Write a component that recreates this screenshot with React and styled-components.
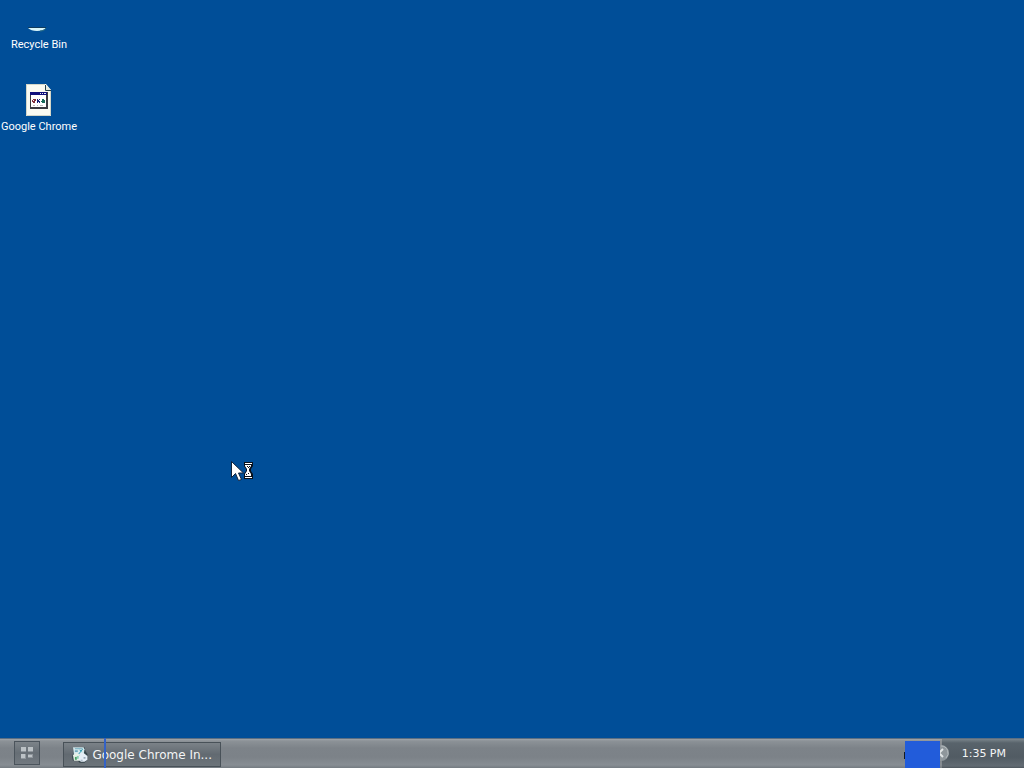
import React from 'react';
import styled, { createGlobalStyle } from 'styled-components';

const GlobalStyle = createGlobalStyle`
  * { box-sizing: border-box; }
  body { margin: 0; background: #004e98; }
`;

const Screen = styled.div`
  position: relative;
  display: flex;
  flex-direction: column;
  min-height: 100vh;
  overflow: hidden;
  cursor: default;
`;

const Desktop = styled.main`
  flex: 1;
  display: flex;
  flex-direction: column;
  align-items: flex-start;
  gap: 32px;
  padding-top: 2px;
  background: #004e98;
`;

const Shortcut = styled.button`
  display: flex;
  flex-direction: column;
  align-items: center;
  gap: 4px;
  width: 78px;
  padding: 0;
  border: 0;
  background: none;
  color: #fff;
  font: 11px/14px Roboto, Tahoma, sans-serif;
  white-space: nowrap;
`;

const Pointer = styled.svg`
  position: absolute;
  left: 231px;
  top: 461px;
  pointer-events: none;
`;

const Taskbar = styled.footer`
  position: relative;
  display: flex;
  align-items: stretch;
  height: 30px;
  border-top: 1px solid #5b6f84;
  background: linear-gradient(#a0a5a9 0, #8c9297 2px, #7d8389 9px, #7c8288 18px, #878d93 26px, #747b81 29px);
  font: 11px/14px 'DejaVu Sans', Verdana, sans-serif;
  color: #f4f5f6;
`;

const StartButton = styled.button`
  display: flex;
  align-items: center;
  justify-content: center;
  width: 26px;
  height: 24px;
  margin: 2px 23px 0 14px;
  padding: 0;
  border: 1px solid #4b545c;
  background: linear-gradient(#7c8389, #666e75 50%, #727980);
`;

const TaskButton = styled.button`
  display: flex;
  align-items: center;
  gap: 4px;
  width: 158px;
  height: 25px;
  margin-top: 3px;
  padding: 0 8px;
  border: 1px solid #485158;
  background: linear-gradient(#7b8288, #626a71 50%, #6c747a);
  color: inherit;
  font: inherit;
  font-size: 12px;
  white-space: nowrap;
`;

const Tray = styled.div`
  display: flex;
  align-items: center;
  gap: 12px;
  margin-left: auto;
  padding-right: 18px;
  background: linear-gradient(#7b858c 0, #58636b 4px, #515b63 18px, #626b73 27px, #4c555c 29px);
`;

const Chevron = styled.button`
  display: flex;
  width: 16px;
  height: 18px;
  margin-left: -8px;
  padding: 0;
  border: 0;
  background: none;
`;

const Line = styled.span`
  position: absolute;
  left: 104px;
  top: -1px;
  width: 2px;
  height: 30px;
  background: #3462c6;
`;

const Patch = styled.span`
  position: absolute;
  right: 84px;
  top: 2px;
  width: 35px;
  height: 27px;
  background: #225cda;
`;

const Notch = styled.span`
  position: absolute;
  right: 119px;
  top: 13px;
  width: 1px;
  height: 7px;
  background: #161b22;
`;

function RecycleIcon() {
  return (
    <svg width="32" height="32" viewBox="0 0 32 32" aria-hidden="true">
      <path d="M5 25.500h18" stroke="#0f3a5c" />
      <path d="M5 26h18c-2 2-5 3-9 3s-7-1-9-3z" fill="#d8f6fa" />
      <path d="M17 29c3 0 5-1 6-3" stroke="#2d7184" fill="none" />
    </svg>
  );
}

function ProgramIcon() {
  return (
    <svg width="32" height="32" viewBox="0 0 32 32" aria-hidden="true">
      <path d="M3 0h20l5 6v26H3z" fill="#fafaf2" />
      <path d="M3 .5h19M3.500 0v31.500h24V7" fill="none" stroke="#d4d6c8" />
      <path d="M22 1v5h6z" fill="#e5eadf" />
      <path d="M22.500 1v5.500H28" fill="none" stroke="#26414a" />
      <rect x="7" y="8" width="18" height="17" fill="#3a3a40" />
      <rect x="8" y="11" width="15" height="12" fill="#fff" />
      <rect x="7" y="8" width="17" height="3" fill="#10107c" />
      <path d="M17 9h1v1h-1zM19 9h1v1h-1zM21 9h2v1h-2z" fill="#e4e4ec" />
      <path d="M10 15h3v2h-1v2h-2v-1H9v-2h1z" fill="#822c38" />
      <path d="M10 16h1v1h-1z" fill="#fff" />
      <path d="M14 15h1v1h1v-1h1v1h-1v1h1v2h-1v-1h-1v1h-1z" fill="#1b2379" />
      <path d="M19 15h2v1h1v3h-3v-1h-1v-1h1z" fill="#176a58" />
      <path d="M10 21h2v1h-2zM14 21h1v1h-1zM17 21h3v1h-3z" fill="#bbb" />
    </svg>
  );
}

function InstallerIcon() {
  return (
    <svg width="17" height="17" viewBox="0 0 17 17" aria-hidden="true">
      <path d="M1 1h12l1 4 2 3v6l-3 3H8l-2-2H1l-1-4 1-3z" fill="#36464c" />
      <path d="M1 1h11l1 2-1 6H2z" fill="#d5e8ec" />
      <path d="M3 2h8v1H3zM3 4h3v2H3z" fill="#6fa9bc" />
      <path d="M11 3L7 8M8 4l2 1" stroke="#2e98b0" strokeWidth="1" />
      <path d="M1 9l4-2 4 3v5H2z" fill="#e7f2e8" />
      <path d="M3 11h2v3H3z" fill="#45a263" />
      <path d="M5 10h2v3H5z" fill="#8ccbb4" />
      <path d="M9 7h3l4 3v4l-3 2H9l-2-3z" fill="#e4edf6" />
      <path d="M12 11h2v2h-2zM9 14h2v1H9z" fill="#9aaabb" />
    </svg>
  );
}

export default function App() {
  return (
    <Screen>
      <GlobalStyle />
      <Desktop>
        <Shortcut><RecycleIcon />Recycle Bin</Shortcut>
        <Shortcut><ProgramIcon />Google Chrome</Shortcut>
      </Desktop>
      <Taskbar>
        <StartButton aria-label="Start">
          <svg width="14" height="14" viewBox="0 0 14 14" aria-hidden="true">
            <path d="M1 1h5v5H1zM8 1h5v5H8zM1 8h5v5H1zM8 8h5v4H8z" fill="#8f969c" />
            <path d="M1 1h5v4H1zM8 1h5v4H8zM1 8h4v4H1zM8 9h4v2H8z" fill="#bcc2c6" />
          </svg>
        </StartButton>
        <TaskButton><InstallerIcon />Google Chrome In...</TaskButton>
        <Tray>
          <Chevron aria-label="Show hidden icons">
            <svg width="16" height="18" viewBox="0 0 16 18" aria-hidden="true">
              <circle cx="7" cy="8" r="8" fill="#8e969b" />
              <path d="M7 1a7 7 0 0 1 5 12" fill="none" stroke="#b3babd" />
              <path d="M9 4L5 8l4 4" fill="none" stroke="#dfe3e5" strokeWidth="2" />
            </svg>
          </Chevron>
          <time>1:35 PM</time>
        </Tray>
        <Line />
        <Patch />
        <Notch />
      </Taskbar>
      <Pointer width="23" height="22" viewBox="0 0 23 22" aria-hidden="true">
        <path d="M.5 .5v16l4-4 3 7 3-1-3-6.500h5z" fill="#fff" stroke="#10233b" />
        <path d="M13 1h9v4l-2 3v2l2 3v5h-9v-5l2-3V8l-2-3z" fill="#08111c" />
        <path d="M14 2h7v1h-7zM14 16h7v1h-7z" fill="#fff" />
        <path d="M14 4h6v1l-2 3v2l2 3v2h-6v-2l2-3V8l-2-3z" fill="#fff" />
        <path d="M16 5h1v1h-1zM18 5h1v1h-1zM17 6h1v1h-1zM17 12h1v1h-1zM15 13h1v1h-1z" fill="#08111c" />
      </Pointer>
    </Screen>
  );
}
